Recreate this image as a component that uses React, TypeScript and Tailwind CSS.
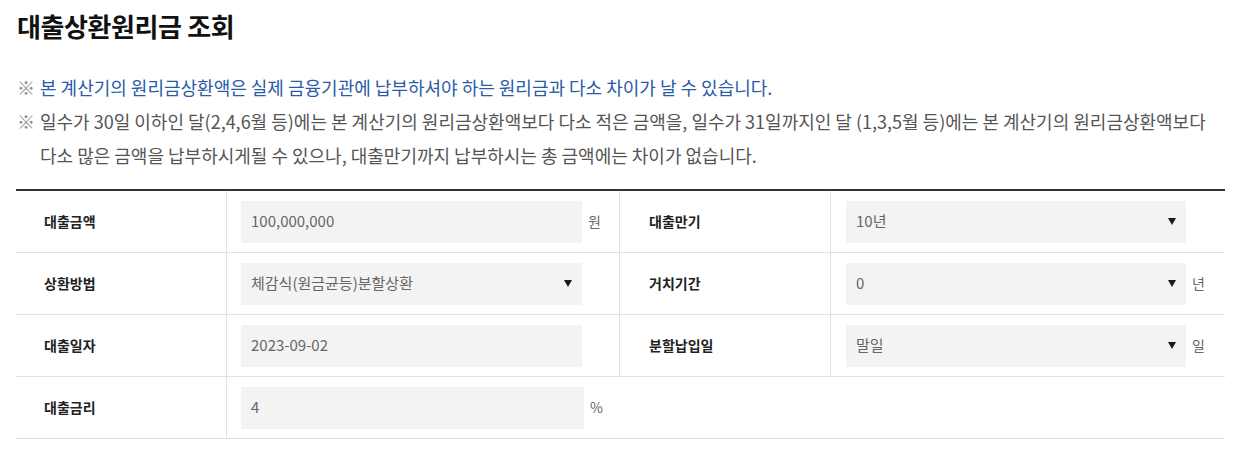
import React from "react";

const FONT = '"Noto Sans CJK KR", "Noto Sans", sans-serif';

function Arrow() {
  return (
    <svg width="8" height="7" viewBox="0 0 8 7" className="shrink-0">
      <path d="M0 0 L8 0 L4 7 Z" fill="#1a1a1a" />
    </svg>
  );
}

function Field({ value, select, unit, width = "w-[341px]" }: { value: string; select?: boolean; unit?: string; width?: string }) {
  return (
    <div className="flex items-center">
      <div className={`${width} h-[42px] bg-[#f3f3f3] flex items-center justify-between pl-[10px] pr-[10px] text-[15px] text-[#666]`}>
        <span>{value}</span>
        {select && <Arrow />}
      </div>
      {unit && <span className="ml-[6px] text-[14px] text-[#666]">{unit}</span>}
    </div>
  );
}

function Label({ text, pad = "pl-[28px]" }: { text: string; pad?: string }) {
  return (
    <div className={`${pad} flex items-center text-[14px] font-bold text-[#222] border-r border-[#e1e1e1]`}>
      {text}
    </div>
  );
}

export default function App() {
  return (
    <div className="bg-white w-[1240px] h-[449px] px-[16px]" style={{ fontFamily: FONT }}>
      {/* 제목 */}
      <h1 className="pt-[6px] h-[46px] leading-[40px] text-[26px] font-semibold text-[#111] tracking-[-0.4px] pl-[1px]">
        대출상환원리금 조회
      </h1>

      {/* 안내 */}
      <ul className="mt-[24px] text-[18px] leading-[34px]">
        <li className="flex">
          <span className="w-[24px] shrink-0 pl-[1px] text-[#8a8a8a]">※</span>
          <span className="text-[#2b5aa6]">
            본 계산기의 원리금상환액은 실제 금융기관에 납부하셔야 하는 원리금과 다소 차이가 날 수 있습니다.
          </span>
        </li>
        <li className="flex">
          <span className="w-[24px] shrink-0 pl-[1px] text-[#8a8a8a]">※</span>
          <span className="text-[#555] whitespace-nowrap">
            일수가 30일 이하인 달(2,4,6월 등)에는 본 계산기의 원리금상환액보다 다소 적은 금액을, 일수가 31일까지인 달 (1,3,5월 등)에는 본 계산기의 원리금상환액보다
            <br />
            다소 많은 금액을 납부하시게될 수 있으나, 대출만기까지 납부하시는 총 금액에는 차이가 없습니다.
          </span>
        </li>
      </ul>

      {/* 입력 표 */}
      <div className="mt-[17px] w-[1209px] border-t-2 border-[#333]">
        <div className="grid grid-cols-[211px_393px_211px_394px] h-[62px] border-b border-[#e1e1e1]">
          <Label text="대출금액" />
          <div className="pl-[14px] flex items-center border-r border-[#e1e1e1]">
            <Field value="100,000,000" unit="원" />
          </div>
          <Label text="대출만기" pad="pl-[29px]" />
          <div className="pl-[15px] flex items-center">
            <Field value="10년" select width="w-[340px]" />
          </div>
        </div>
        <div className="grid grid-cols-[211px_393px_211px_394px] h-[62px] border-b border-[#e1e1e1]">
          <Label text="상환방법" />
          <div className="pl-[14px] flex items-center border-r border-[#e1e1e1]">
            <Field value="체감식(원금균등)분할상환" select />
          </div>
          <Label text="거치기간" pad="pl-[29px]" />
          <div className="pl-[15px] flex items-center">
            <Field value="0" select unit="년" width="w-[340px]" />
          </div>
        </div>
        <div className="grid grid-cols-[211px_393px_211px_394px] h-[62px] border-b border-[#e1e1e1]">
          <Label text="대출일자" />
          <div className="pl-[14px] flex items-center border-r border-[#e1e1e1]">
            <Field value="2023-09-02" />
          </div>
          <Label text="분할납입일" pad="pl-[29px]" />
          <div className="pl-[15px] flex items-center">
            <Field value="말일" select unit="일" width="w-[340px]" />
          </div>
        </div>
        <div className="grid grid-cols-[211px_998px] h-[62px] border-b border-[#e1e1e1]">
          <Label text="대출금리" />
          <div className="pl-[14px] flex items-center">
            <Field value="4" unit="%" width="w-[343px]" />
          </div>
        </div>
      </div>
    </div>
  );
}
